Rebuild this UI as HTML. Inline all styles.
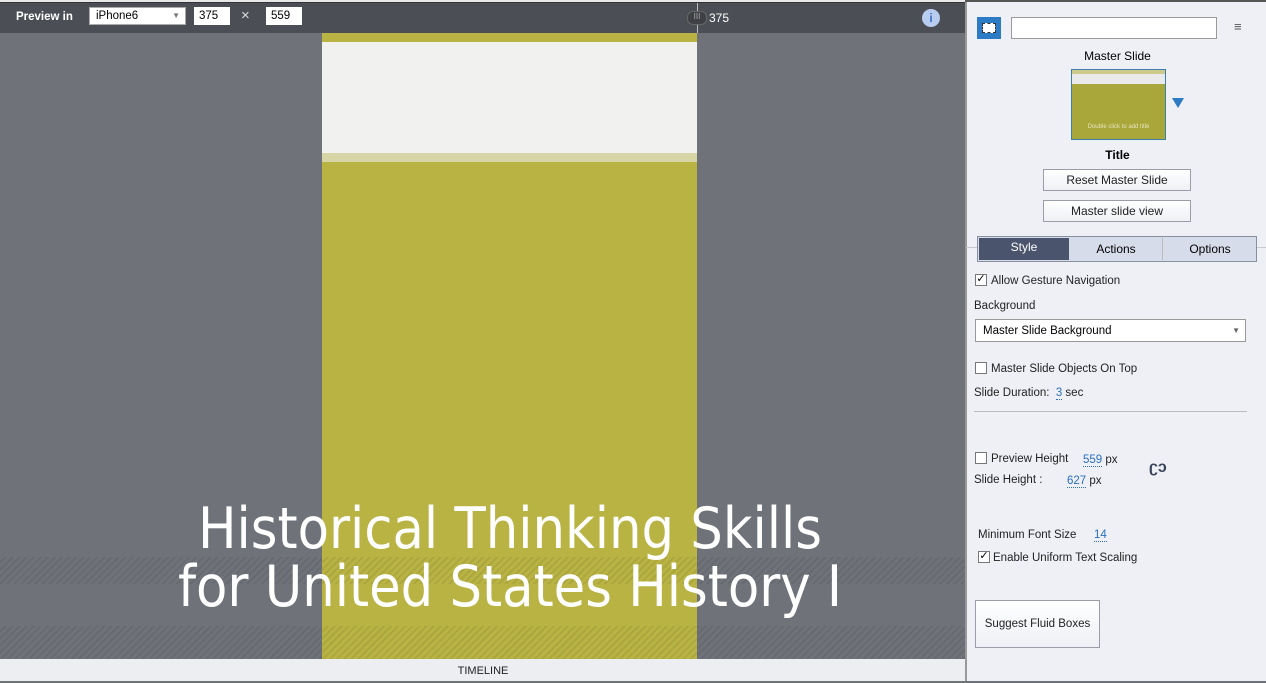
<!DOCTYPE html>
<html><head><meta charset="utf-8"><style>
*{margin:0;padding:0;box-sizing:border-box}
body{width:1266px;height:681px;overflow:hidden;position:relative;font-family:"Liberation Sans",sans-serif;background:#6f7279}
.a{position:absolute}
.hatch{background:repeating-linear-gradient(135deg,rgba(255,255,255,0) 0 3px,rgba(0,0,0,0.07) 3px 5px)}
.btn{position:absolute;background:linear-gradient(#fff,#eef0f5);border:1px solid #9a9ca8;font-size:12px;color:#222;text-align:center}
.t12{font-size:11.5px;color:#222;margin-top:2px}
.cb{position:absolute;width:12px;height:12px;border:1px solid #777;background:#fff}
.lnk{color:#2a6fc0;border-bottom:1px dotted #2a6fc0}
</style></head><body>
<div class="a" style="left:0;top:0;width:966px;height:3px;background:#e8e8ea;border-bottom:1px solid #333"></div>
<div class="a" style="left:0;top:3px;width:966px;height:30px;background:#4b4e55"></div>
<div class="a" style="left:16px;top:11px;color:#fff;font-size:11.5px;font-weight:bold">Preview in</div>
<div class="a" style="left:89px;top:7px;width:97px;height:18px;background:#fff;border:1px solid #aaa;font-size:11.5px;padding:2px 6px">iPhone6<span style="position:absolute;right:5px;top:3px;font-size:8px;color:#777">▼</span></div>
<div class="a" style="left:194px;top:7px;width:36px;height:18px;background:#fff;font-size:11.5px;padding:3px 5px">375</div>
<div class="a" style="left:241px;top:7px;color:#ddd;font-size:15px">×</div>
<div class="a" style="left:266px;top:7px;width:36px;height:18px;background:#fff;font-size:11.5px;padding:3px 5px">559</div>
<div class="a" style="left:697px;top:3px;width:1px;height:30px;background:#bbb"></div>
<div class="a" style="left:687px;top:11px;width:20px;height:14px;background:#3e4046;border:1px solid #666;border-radius:6px;color:#aaa;font-size:8px;text-align:center">III</div>
<div class="a" style="left:709px;top:11px;color:#fff;font-size:12px">375</div>
<div class="a" style="left:922px;top:9px;width:18px;height:18px;border-radius:50%;background:#b8ccf0;color:#3c6fc8;font-size:12px;text-align:center;line-height:18px;font-weight:bold">i</div>
<div class="a hatch" style="left:0;top:557px;width:966px;height:27px"></div>
<div class="a hatch" style="left:0;top:626px;width:966px;height:33px"></div>
<div class="a" style="left:322px;top:33px;width:375px;height:626px;background:#b9b343"></div>
<div class="a" style="left:322px;top:42px;width:375px;height:111px;background:#f1f1ef"></div>
<div class="a" style="left:322px;top:153px;width:375px;height:9px;background:#d7d4a6"></div>
<div class="a hatch" style="left:322px;top:557px;width:375px;height:27px"></div>
<div class="a hatch" style="left:322px;top:626px;width:375px;height:33px"></div>
<div class="a" style="left:80px;top:500px;width:860px;text-align:center;color:#fff;font-size:57px;line-height:58px;font-family:'DejaVu Sans Condensed','Liberation Sans Narrow',sans-serif">Historical Thinking Skills<br>for United States History I</div>
<div class="a" style="left:0;top:659px;width:966px;height:22px;background:#eceef2;text-align:center;font-size:11px;line-height:24px;color:#222">TIMELINE</div>
<div class="a" style="left:965px;top:0;width:301px;height:681px;background:#eef0f6;border-left:2px solid #999"></div>
<div class="a" style="left:965px;top:0;width:301px;height:2px;background:#555"></div>
<div class="a" style="left:977px;top:17px;width:24px;height:22px;background:#2d7bc4"><div style="position:absolute;left:5px;top:6px;width:14px;height:10px;background:#fff;border:1px dashed #333"></div></div>
<div class="a" style="left:1011px;top:17px;width:206px;height:22px;background:#fff;border:1px solid #999"></div>
<div class="a" style="left:1234px;top:19px;font-size:13px;color:#555">≡</div>
<div class="a" style="left:966px;top:49px;width:303px;text-align:center;font-size:12px">Master Slide</div>
<div class="a" style="left:1071px;top:69px;width:95px;height:71px;background:#a9a63a;border:1px solid #3b7ea8">
<div style="height:4px;background:#ccc98a"></div><div style="height:10px;background:#eaeaea"></div>
<div style="position:absolute;top:54px;width:100%;text-align:center;font-size:6px;color:#e8e6c0">Double click to add title</div></div>
<div class="a" style="left:1172px;top:98px;width:0;height:0;border-left:6px solid transparent;border-right:6px solid transparent;border-top:10px solid #2d7bc4"></div>
<div class="a" style="left:966px;top:148px;width:303px;text-align:center;font-size:12px;font-weight:bold">Title</div>
<div class="btn" style="left:1043px;top:169px;width:148px;height:22px;line-height:21px">Reset Master Slide</div>
<div class="btn" style="left:1043px;top:200px;width:148px;height:22px;line-height:21px">Master slide view</div>
<div class="a" style="left:966px;top:247px;width:300px;height:1px;background:#c8c9ce"></div>
<div class="a" style="left:977px;top:236px;width:280px;height:26px;border:1px solid #8890a0;background:#d6dcea"></div>
<div class="a" style="left:979px;top:238px;width:90px;height:22px;background:#4a546c;color:#fff;font-size:12px;text-align:center;line-height:19px">Style</div>
<div class="a" style="left:1070px;top:238px;width:93px;height:22px;font-size:12px;text-align:center;line-height:22px;border-right:1px solid #bbb">Actions</div>
<div class="a" style="left:1164px;top:238px;width:92px;height:22px;font-size:12px;text-align:center;line-height:22px">Options</div>
<div class="cb" style="left:975px;top:274px;font-size:11px;line-height:9px;text-align:center">✓</div>
<div class="a t12" style="left:991px;top:273px">Allow Gesture Navigation</div>
<div class="a t12" style="left:974px;top:298px">Background</div>
<div class="a" style="left:975px;top:319px;width:271px;height:23px;background:#fff;border:1px solid #999;font-size:11.5px;padding:5px 7px">Master Slide Background<span style="position:absolute;right:5px;top:6px;font-size:8px;color:#666">▼</span></div>
<div class="cb" style="left:975px;top:362px"></div>
<div class="a t12" style="left:991px;top:361px">Master Slide Objects On Top</div>
<div class="a t12" style="left:974px;top:385px">Slide Duration: &nbsp;<span class="lnk">3</span> sec</div>
<div class="a" style="left:974px;top:411px;width:273px;height:1px;background:#bbb"></div>
<div class="cb" style="left:975px;top:452px"></div>
<div class="a t12" style="left:991px;top:451px">Preview Height</div>
<div class="a t12" style="left:1083px;top:452px"><span class="lnk">559</span> px</div>
<div class="a t12" style="left:974px;top:472px">Slide Height :</div>
<div class="a t12" style="left:1067px;top:473px"><span class="lnk">627</span> px</div>
<div class="a" style="left:1149px;top:459px;color:#3a4458;font-size:16px;font-weight:bold">ʗɔ</div>
<div class="a t12" style="left:978px;top:527px">Minimum Font Size</div>
<div class="a t12" style="left:1094px;top:527px"><span class="lnk">14</span></div>
<div class="cb" style="left:978px;top:551px;font-size:11px;line-height:9px;text-align:center">✓</div>
<div class="a t12" style="left:993px;top:550px">Enable Uniform Text Scaling</div>
<div class="btn" style="left:975px;top:600px;width:125px;height:48px;line-height:47px;font-size:11.5px">Suggest Fluid Boxes</div>
</body></html>
